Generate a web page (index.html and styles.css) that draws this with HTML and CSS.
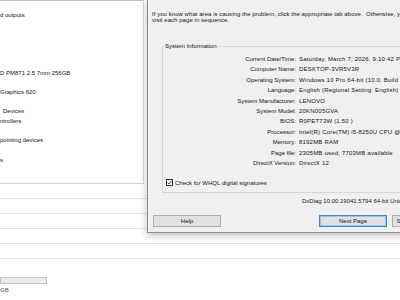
FILE: index.html
```html
<!DOCTYPE html>
<html lang="en">
<head>
  <meta charset="UTF-8" />
  <title>DirectX Diagnostic Tool</title>
  <link rel="stylesheet" href="styles.css">
</head>
<body>

<div class="desktop">
  <div class="devmgr">
    <ul class="tree">
      <li>d outputs</li>
      <li></li><li></li><li></li><li></li><li></li>
      <li>D PM871 2.5 7mm 256GB</li>
      <li></li>
      <li>Graphics 620</li>
      <li></li>
      <li class="cut">Devices</li>
      <li>ntrollers</li>
      <li></li>
      <li>pointing devices</li>
      <li></li>
      <li>s</li>
    </ul>
    <div class="rows">
      <div></div><div></div><div></div><div></div><div></div>
    </div>
    <div class="meter"></div>
    <div class="size">GB</div>
  </div>

  <div class="dialog">
    <p class="intro">If you know what area is causing the problem, click the appropriate tab above.&nbsp; Otherwise, you can<br>visit each page in sequence.</p>

    <fieldset class="group">
      <legend>System Information</legend>
      <div class="info">
        <span>Current Date/Time:</span><span>Saturday, March 7, 2026, 9:10:42 PM</span>
        <span>Computer Name:</span><span>DESKTOP-3VR5V3R</span>
        <span>Operating System:</span><span>Windows 10 Pro 64-bit (10.0, Build 19045)</span>
        <span>Language:</span><span>English (Regional Setting: English)</span>
        <span>System Manufacturer:</span><span>LENOVO</span>
        <span>System Model:</span><span>20KN005GVA</span>
        <span>BIOS:</span><span>R0PET73W (1.50 )</span>
        <span>Processor:</span><span>Intel(R) Core(TM) i5-8250U CPU @ 1.60GHz (8 CPUs), ~1.8GHz</span>
        <span>Memory:</span><span>8192MB RAM</span>
        <span>Page file:</span><span>2305MB used, 7703MB available</span>
        <span>DirectX Version:</span><span>DirectX 12</span>
      </div>
      <label class="check">
        <svg width="7" height="7" viewBox="0 0 7 7">
          <rect x="0.5" y="0.5" width="6" height="6" fill="#fff" stroke="#333"/>
          <path d="M1.5 3.6 L2.9 5 L5.6 1.9" fill="none" stroke="#222" stroke-width="0.9"/>
        </svg>
        Check for WHQL digital signatures
      </label>
    </fieldset>

    <div class="version">DxDiag 10.00.19041.5794 64-bit Unicode&nbsp; Copyright © Microsoft. All rights reserved.</div>

    <div class="buttons">
      <button class="help">Help</button>
      <button class="next">Next Page</button>
      <button class="save">Save All Information...</button>
    </div>
  </div>
</div>

</body>
</html>
```

FILE: styles.css
```css
body {
  margin: 0;
  font-family: 'Liberation Sans', Arial, sans-serif;
  font-size: 6px;
  color: #141414;
  background: white;
}
.desktop {
  position: relative;
  width: 400px;
  height: 300px;
  overflow: hidden;
  background: white;
}
.devmgr {
  display: flex;
  flex-direction: column;
}
.tree {
  list-style: none;
  margin: 0;
  padding: 9.5px 0 0 0;
  width: 144px;
  height: 184px;
  box-sizing: border-box;
  border-top: 1px solid #c4c4c4;
  border-right: 1px solid #dcdcdc;
  border-bottom: 1px solid #d2d2d2;
}
.tree li {
  height: 9.7px;
  line-height: 9.7px;
  white-space: nowrap;
}
.tree li.cut {
  padding-left: 3px;
}
.rows div {
  height: 15px;
  box-sizing: border-box;
  border-bottom: 1px solid #e2e2e2;
}
.meter {
  width: 47px;
  height: 7px;
  box-sizing: border-box;
  margin-top: 18px;
  border: 1px solid #c2c2c2;
  background: #ececec;
}
.size {
  margin-top: 3px;
  line-height: 6px;
  color: #555;
}

.dialog {
  position: absolute;
  left: 147px;
  top: -1px;
  width: 275px;
  height: 234px;
  box-sizing: border-box;
  background: #f0f0f0;
  border: 1px solid #8c8c8c;
  box-shadow: 0 2px 8px rgba(0,0,0,0.28);
  display: flex;
  flex-direction: column;
  white-space: nowrap;
}
.intro {
  margin: 0;
  padding: 10.5px 0 0 4px;
  line-height: 6px;
  letter-spacing: 0.05px;
}
.group {
  margin: 20.5px 0 0 14px;
  padding: 4.8px 0 5px 0;
  border: 1px solid #d6d6d6;
  min-inline-size: auto;
}
.group legend {
  margin-left: 1px;
  padding: 0 1px;
  line-height: 6px;
}
.info {
  display: grid;
  grid-template-columns: 133px auto;
  grid-auto-rows: 10.4px;
  column-gap: 3px;
  align-items: center;
}
.info span:nth-child(odd) {
  text-align: right;
}
.info span:nth-child(even) {
  letter-spacing: 0.2px;
}
.check {
  display: flex;
  align-items: center;
  gap: 2px;
  height: 8px;
  margin: 10.8px 0 0 3px;
}
.version {
  margin-top: 5px;
  padding-left: 154px;
  line-height: 6px;
}
.buttons {
  display: flex;
  margin-top: 11px;
}
.buttons button {
  width: 68px;
  height: 12px;
  padding: 0;
  box-sizing: border-box;
  font-family: inherit;
  font-size: 6px;
  color: #141414;
  background: #e1e1e1;
  border: 1px solid #adadad;
  flex-shrink: 0;
}
.help {
  margin-left: 5px;
}
.next {
  margin-left: 98px;
  border-color: #3c8ad2 !important;
  box-shadow: inset 0 0 0 1px #9dc4ea;
}
.save {
  margin-left: 5px;
}
```
